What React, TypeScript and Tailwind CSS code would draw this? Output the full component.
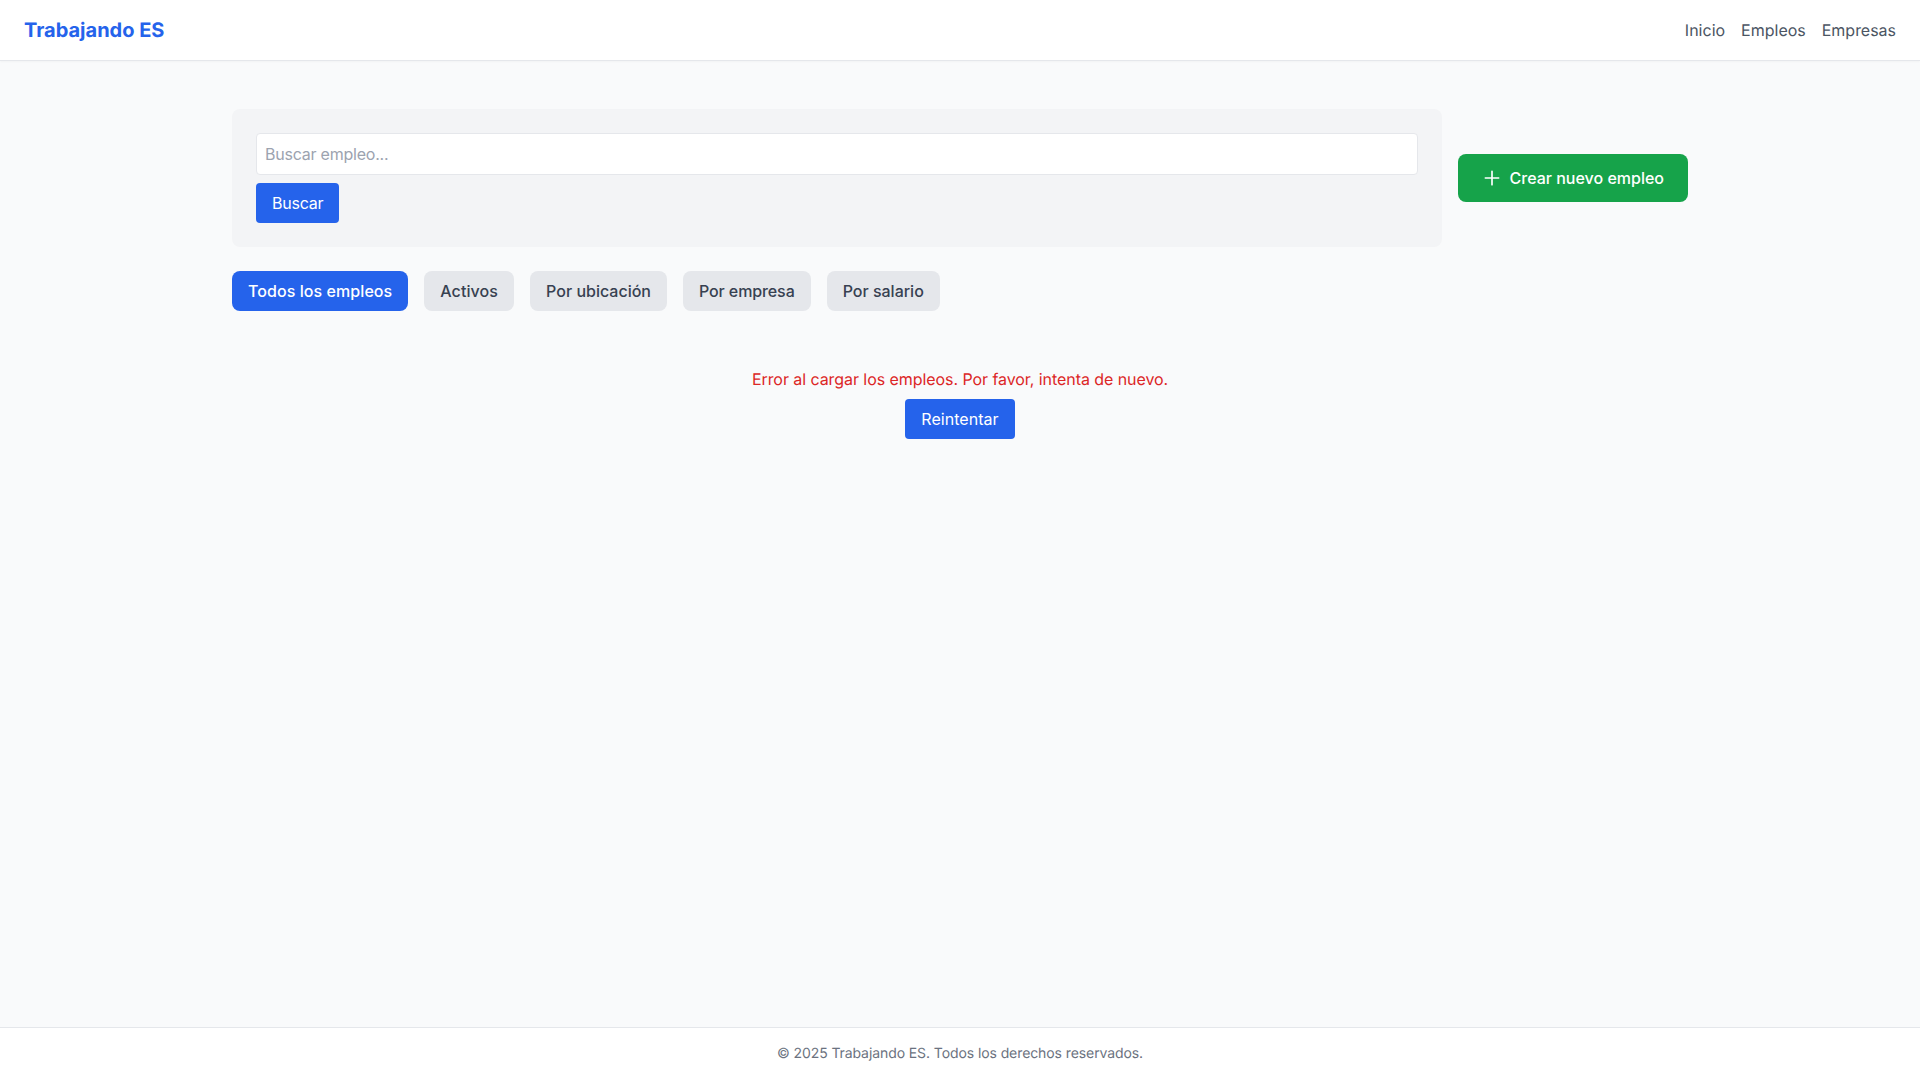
const filters = [
  { label: "Activos", cls: "tracking-[0.1px]" },
  { label: "Por ubicación", cls: "" },
  { label: "Por empresa", cls: "tracking-[-0.1px]" },
  { label: "Por salario", cls: "" },
];

export default function App() {
  return (
    <div className="min-h-screen flex flex-col bg-[#f9fafb] font-['Inter',sans-serif] text-base [text-rendering:geometricPrecision]">
      <header className="bg-white border-b border-[#e5e7eb] h-[61px] px-6 flex items-center justify-between shadow-[0_1px_2px_0_rgb(0_0_0/0.03)]">
        <a className="text-xl font-bold text-[#2563eb]">Trabajando ES</a>
        <nav className="flex gap-4 text-[#4b5563]">
          <a>Inicio</a>
          <a>Empleos</a>
          <a className="tracking-[-0.02px]">Empresas</a>
        </nav>
      </header>

      <main className="flex-1 w-full max-w-[1456px] mx-auto py-12">
        <div className="flex items-center gap-4 mb-6">
          <div className="flex-1 bg-[#f3f4f6] rounded-lg p-6">
            <input
              placeholder="Buscar empleo..."
              className="w-full border border-[#e5e7eb] bg-white rounded px-2 py-2 outline-none placeholder:text-[#9ca3af] placeholder:tracking-[-0.23px]"
            />
            <button className="mt-2 block bg-[#2563eb] text-white rounded px-4 py-2 tracking-[-0.25px]">Buscar</button>
          </div>
          <button className="flex items-center gap-2 bg-[#16a34a] text-white font-medium rounded-lg px-6 py-3">
            <svg width="20" height="20" viewBox="0 0 24 24" fill="none" stroke="currentColor" strokeWidth="2" strokeLinecap="round" strokeLinejoin="round">
              <path d="M12 4v16m8-8H4" />
            </svg>
            Crear nuevo empleo
          </button>
        </div>

        <div className="flex gap-4">
          <button className="bg-[#2563eb] text-white font-medium rounded-lg px-4 py-2 tracking-[0.07px]">Todos los empleos</button>
          {filters.map((f) => (
            <button key={f.label} className={`bg-[#e5e7eb] text-[#374151] font-medium rounded-lg px-4 py-2 ${f.cls}`}>
              {f.label}
            </button>
          ))}
        </div>

        <div className="text-center py-14">
          <p className="text-[#dc2626] tracking-[-0.065px]">Error al cargar los empleos. Por favor, intenta de nuevo.</p>
          <button className="mt-2 bg-[#2563eb] text-white rounded px-4 py-2 tracking-[0.05px]">Reintentar</button>
        </div>
      </main>

      <footer className="bg-white border-t border-[#e5e7eb] py-4 text-center text-sm text-[#6b7280] tracking-[-0.09px]">
        © 2025 Trabajando ES. Todos los derechos reservados.
      </footer>
    </div>
  );
}
